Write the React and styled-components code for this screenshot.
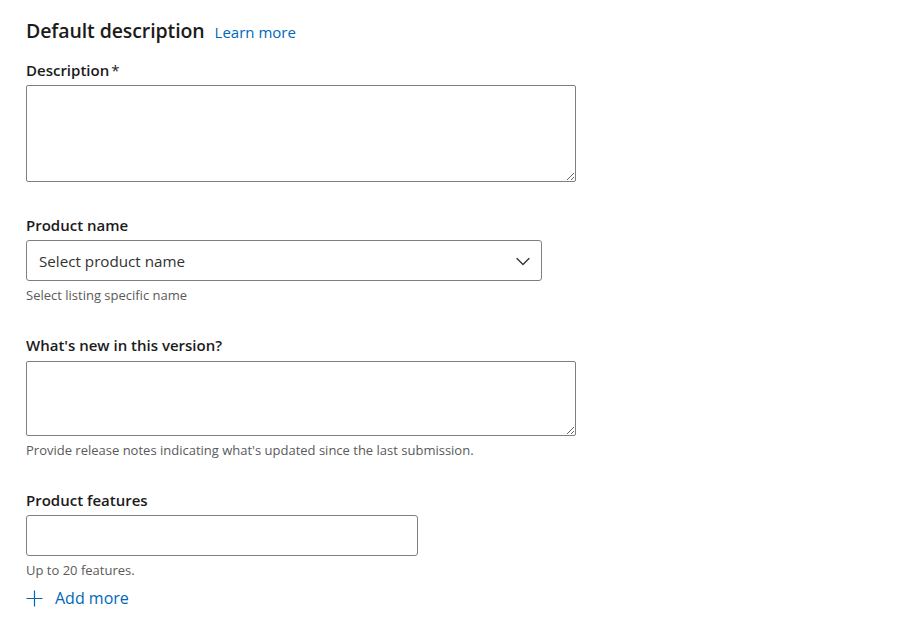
import React from "react";
import styled, { createGlobalStyle } from "styled-components";

const Global = createGlobalStyle`
  html, body { margin: 0; padding: 0; background: #ffffff; }
  body { font-family: "Open Sans", "Noto Sans", "Liberation Sans", sans-serif; color: #1b1b1b; }
  * { box-sizing: border-box; }
`;

const Page = styled.div`
  padding: 17px 0 0 26px;
  width: 903px;
  height: 618px;
  overflow: hidden;
`;

const HeadingRow = styled.div`
  display: flex;
  align-items: baseline;
  gap: 10px;
  height: 28px;
  margin-bottom: 15px;
`;

const Heading = styled.h2`
  margin: 0;
  font-size: 19.5px;
  line-height: 28px;
  font-weight: 600;
  letter-spacing: -0.1px;
  color: #1b1b1b;
`;

const Link = styled.a`
  font-size: 15px;
  color: #0067b8;
  text-decoration: none;
  cursor: pointer;
`;

const Field = styled.div`
  display: flex;
  flex-direction: column;
  align-items: flex-start;
  margin-top: ${(p) => p.$top || 0}px;
`;

const Label = styled.label`
  font-size: 15px;
  line-height: 20px;
  font-weight: 600;
  color: #1b1b1b;
  margin-bottom: ${(p) => p.$gap || 5}px;
`;

const Star = styled.span`
  margin-left: 2px;
  font-weight: 400;
`;

const TextArea = styled.textarea`
  display: block;
  width: ${(p) => p.$w}px;
  height: ${(p) => p.$h}px;
  border: 1px solid #7f7f7f;
  border-radius: 2px;
  padding: 6px 10px;
  font-family: inherit;
  font-size: 15px;
  resize: vertical;
  outline: none;
`;

const Input = styled.input`
  display: block;
  width: ${(p) => p.$w}px;
  height: 41px;
  border: 1px solid #7f7f7f;
  border-radius: 3px;
  padding: 0 12px;
  font-family: inherit;
  font-size: 15px;
  outline: none;
`;

const SelectBox = styled.div`
  display: flex;
  align-items: center;
  justify-content: space-between;
  width: 516px;
  height: 41px;
  border: 1px solid #7f7f7f;
  border-radius: 3px;
  padding: 0 10px 0 12px;
  cursor: pointer;
`;

const SelectText = styled.span`
  font-size: 15.2px;
  color: #323130;
`;

const Helper = styled.div`
  font-size: 13px;
  line-height: 18px;
  color: #5a5a5a;
  margin-top: 5px;
`;

const AddButton = styled.button`
  display: flex;
  align-items: center;
  gap: 12px;
  margin-top: 8px;
  padding: 0;
  border: 0;
  background: none;
  font-family: inherit;
  font-size: 16px;
  line-height: 22px;
  color: #0067b8;
  cursor: pointer;
`;

const Chevron = () => (
  <svg width="16" height="16" viewBox="0 0 16 16" fill="none">
    <path d="M2 5.5 L8 11.5 L14 5.5" stroke="#323130" strokeWidth="1.3" strokeLinecap="round" strokeLinejoin="round" />
  </svg>
);

const Plus = () => (
  <svg width="17" height="17" viewBox="0 0 17 17" fill="none">
    <path d="M8.5 0.5 V16.5 M0.5 8.5 H16.5" stroke="#0067b8" strokeWidth="1.2" />
  </svg>
);

export default function App() {
  return (
    <>
      <Global />
      <Page>
        <HeadingRow>
          <Heading>Default description</Heading>
          <Link>Learn more</Link>
        </HeadingRow>

        <Field>
          <Label>
            Description<Star>*</Star>
          </Label>
          <TextArea $w={550} $h={97} />
        </Field>

        <Field $top={33}>
          <Label>Product name</Label>
          <SelectBox>
            <SelectText>Select product name</SelectText>
            <Chevron />
          </SelectBox>
          <Helper>Select listing specific name</Helper>
        </Field>

        <Field $top={31}>
          <Label $gap={6}>What's new in this version?</Label>
          <TextArea $w={550} $h={75} />
          <Helper>Provide release notes indicating what's updated since the last submission.</Helper>
        </Field>

        <Field $top={31}>
          <Label $gap={5}>Product features</Label>
          <Input $w={392} />
          <Helper>Up to 20 features.</Helper>
          <AddButton>
            <Plus />
            Add more
          </AddButton>
        </Field>
      </Page>
    </>
  );
}
